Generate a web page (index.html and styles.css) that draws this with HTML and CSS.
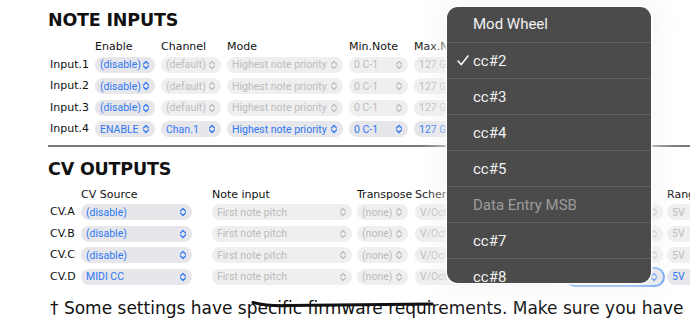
FILE: index.html
```html
<!DOCTYPE html>
<html lang="en">
<head>
    <meta charset="UTF-8">
    <meta name="viewport" content="width=device-width, initial-scale=1.0">
    <title>Settings</title>
    <link rel="stylesheet" href="styles.css">
</head>
<body>
    <div class="page">
        <h2 class="first">NOTE INPUTS</h2>
        <div class="grid notes">
            <span></span>
            <span class="hd">Enable</span>
            <span class="hd">Channel</span>
            <span class="hd">Mode</span>
            <span class="hd">Min.Note</span>
            <span class="hd">Max.Note</span>

            <span class="lbl">Input.1</span>
            <div class="sel on"><span>(disable)</span><svg viewBox="0 0 8 10"><path d="M1.5 4 L4 1.5 L6.5 4 M1.5 6 L4 8.5 L6.5 6"/></svg></div>
            <div class="sel off"><span>(default)</span><svg viewBox="0 0 8 10"><path d="M1.5 4 L4 1.5 L6.5 4 M1.5 6 L4 8.5 L6.5 6"/></svg></div>
            <div class="sel off"><span>Highest note priority</span><svg viewBox="0 0 8 10"><path d="M1.5 4 L4 1.5 L6.5 4 M1.5 6 L4 8.5 L6.5 6"/></svg></div>
            <div class="sel off"><span>0 C-1</span><svg viewBox="0 0 8 10"><path d="M1.5 4 L4 1.5 L6.5 4 M1.5 6 L4 8.5 L6.5 6"/></svg></div>
            <div class="sel off"><span>127 G9</span><svg viewBox="0 0 8 10"><path d="M1.5 4 L4 1.5 L6.5 4 M1.5 6 L4 8.5 L6.5 6"/></svg></div>

            <span class="lbl">Input.2</span>
            <div class="sel on"><span>(disable)</span><svg viewBox="0 0 8 10"><path d="M1.5 4 L4 1.5 L6.5 4 M1.5 6 L4 8.5 L6.5 6"/></svg></div>
            <div class="sel off"><span>(default)</span><svg viewBox="0 0 8 10"><path d="M1.5 4 L4 1.5 L6.5 4 M1.5 6 L4 8.5 L6.5 6"/></svg></div>
            <div class="sel off"><span>Highest note priority</span><svg viewBox="0 0 8 10"><path d="M1.5 4 L4 1.5 L6.5 4 M1.5 6 L4 8.5 L6.5 6"/></svg></div>
            <div class="sel off"><span>0 C-1</span><svg viewBox="0 0 8 10"><path d="M1.5 4 L4 1.5 L6.5 4 M1.5 6 L4 8.5 L6.5 6"/></svg></div>
            <div class="sel off"><span>127 G9</span><svg viewBox="0 0 8 10"><path d="M1.5 4 L4 1.5 L6.5 4 M1.5 6 L4 8.5 L6.5 6"/></svg></div>

            <span class="lbl">Input.3</span>
            <div class="sel on"><span>(disable)</span><svg viewBox="0 0 8 10"><path d="M1.5 4 L4 1.5 L6.5 4 M1.5 6 L4 8.5 L6.5 6"/></svg></div>
            <div class="sel off"><span>(default)</span><svg viewBox="0 0 8 10"><path d="M1.5 4 L4 1.5 L6.5 4 M1.5 6 L4 8.5 L6.5 6"/></svg></div>
            <div class="sel off"><span>Highest note priority</span><svg viewBox="0 0 8 10"><path d="M1.5 4 L4 1.5 L6.5 4 M1.5 6 L4 8.5 L6.5 6"/></svg></div>
            <div class="sel off"><span>0 C-1</span><svg viewBox="0 0 8 10"><path d="M1.5 4 L4 1.5 L6.5 4 M1.5 6 L4 8.5 L6.5 6"/></svg></div>
            <div class="sel off"><span>127 G9</span><svg viewBox="0 0 8 10"><path d="M1.5 4 L4 1.5 L6.5 4 M1.5 6 L4 8.5 L6.5 6"/></svg></div>

            <span class="lbl">Input.4</span>
            <div class="sel on"><span>ENABLE</span><svg viewBox="0 0 8 10"><path d="M1.5 4 L4 1.5 L6.5 4 M1.5 6 L4 8.5 L6.5 6"/></svg></div>
            <div class="sel on"><span>Chan.1</span><svg viewBox="0 0 8 10"><path d="M1.5 4 L4 1.5 L6.5 4 M1.5 6 L4 8.5 L6.5 6"/></svg></div>
            <div class="sel on"><span>Highest note priority</span><svg viewBox="0 0 8 10"><path d="M1.5 4 L4 1.5 L6.5 4 M1.5 6 L4 8.5 L6.5 6"/></svg></div>
            <div class="sel on"><span>0 C-1</span><svg viewBox="0 0 8 10"><path d="M1.5 4 L4 1.5 L6.5 4 M1.5 6 L4 8.5 L6.5 6"/></svg></div>
            <div class="sel on"><span>127 G9</span><svg viewBox="0 0 8 10"><path d="M1.5 4 L4 1.5 L6.5 4 M1.5 6 L4 8.5 L6.5 6"/></svg></div>
        </div>

        <hr>

        <h2>CV OUTPUTS</h2>
        <div class="grid cv">
            <span></span>
            <span class="hd">CV Source</span>
            <span class="hd">Note input</span>
            <span class="hd">Transpose</span>
            <span class="hd">Scheme</span>
            <span class="hd"></span>
            <span class="hd">Range</span>

            <span class="lbl">CV.A</span>
            <div class="sel on"><span>(disable)</span><svg viewBox="0 0 8 10"><path d="M1.5 4 L4 1.5 L6.5 4 M1.5 6 L4 8.5 L6.5 6"/></svg></div>
            <div class="sel off"><span>First note pitch</span><svg viewBox="0 0 8 10"><path d="M1.5 4 L4 1.5 L6.5 4 M1.5 6 L4 8.5 L6.5 6"/></svg></div>
            <div class="sel off"><span>(none)</span><svg viewBox="0 0 8 10"><path d="M1.5 4 L4 1.5 L6.5 4 M1.5 6 L4 8.5 L6.5 6"/></svg></div>
            <div class="sel off"><span>V/Oct</span><svg viewBox="0 0 8 10"><path d="M1.5 4 L4 1.5 L6.5 4 M1.5 6 L4 8.5 L6.5 6"/></svg></div>
            <div class="sel off"><span></span><svg viewBox="0 0 8 10"><path d="M1.5 4 L4 1.5 L6.5 4 M1.5 6 L4 8.5 L6.5 6"/></svg></div>
            <div class="sel off"><span>5V</span><svg viewBox="0 0 8 10"><path d="M1.5 4 L4 1.5 L6.5 4 M1.5 6 L4 8.5 L6.5 6"/></svg></div>

            <span class="lbl">CV.B</span>
            <div class="sel on"><span>(disable)</span><svg viewBox="0 0 8 10"><path d="M1.5 4 L4 1.5 L6.5 4 M1.5 6 L4 8.5 L6.5 6"/></svg></div>
            <div class="sel off"><span>First note pitch</span><svg viewBox="0 0 8 10"><path d="M1.5 4 L4 1.5 L6.5 4 M1.5 6 L4 8.5 L6.5 6"/></svg></div>
            <div class="sel off"><span>(none)</span><svg viewBox="0 0 8 10"><path d="M1.5 4 L4 1.5 L6.5 4 M1.5 6 L4 8.5 L6.5 6"/></svg></div>
            <div class="sel off"><span>V/Oct</span><svg viewBox="0 0 8 10"><path d="M1.5 4 L4 1.5 L6.5 4 M1.5 6 L4 8.5 L6.5 6"/></svg></div>
            <div class="sel off"><span></span><svg viewBox="0 0 8 10"><path d="M1.5 4 L4 1.5 L6.5 4 M1.5 6 L4 8.5 L6.5 6"/></svg></div>
            <div class="sel off"><span>5V</span><svg viewBox="0 0 8 10"><path d="M1.5 4 L4 1.5 L6.5 4 M1.5 6 L4 8.5 L6.5 6"/></svg></div>

            <span class="lbl">CV.C</span>
            <div class="sel on"><span>(disable)</span><svg viewBox="0 0 8 10"><path d="M1.5 4 L4 1.5 L6.5 4 M1.5 6 L4 8.5 L6.5 6"/></svg></div>
            <div class="sel off"><span>First note pitch</span><svg viewBox="0 0 8 10"><path d="M1.5 4 L4 1.5 L6.5 4 M1.5 6 L4 8.5 L6.5 6"/></svg></div>
            <div class="sel off"><span>(none)</span><svg viewBox="0 0 8 10"><path d="M1.5 4 L4 1.5 L6.5 4 M1.5 6 L4 8.5 L6.5 6"/></svg></div>
            <div class="sel off"><span>V/Oct</span><svg viewBox="0 0 8 10"><path d="M1.5 4 L4 1.5 L6.5 4 M1.5 6 L4 8.5 L6.5 6"/></svg></div>
            <div class="sel off"><span></span><svg viewBox="0 0 8 10"><path d="M1.5 4 L4 1.5 L6.5 4 M1.5 6 L4 8.5 L6.5 6"/></svg></div>
            <div class="sel off"><span>5V</span><svg viewBox="0 0 8 10"><path d="M1.5 4 L4 1.5 L6.5 4 M1.5 6 L4 8.5 L6.5 6"/></svg></div>

            <span class="lbl">CV.D</span>
            <div class="sel on"><span>MIDI CC</span><svg viewBox="0 0 8 10"><path d="M1.5 4 L4 1.5 L6.5 4 M1.5 6 L4 8.5 L6.5 6"/></svg></div>
            <div class="sel off"><span>First note pitch</span><svg viewBox="0 0 8 10"><path d="M1.5 4 L4 1.5 L6.5 4 M1.5 6 L4 8.5 L6.5 6"/></svg></div>
            <div class="sel off"><span>(none)</span><svg viewBox="0 0 8 10"><path d="M1.5 4 L4 1.5 L6.5 4 M1.5 6 L4 8.5 L6.5 6"/></svg></div>
            <div class="sel off"><span>V/Oct</span><svg viewBox="0 0 8 10"><path d="M1.5 4 L4 1.5 L6.5 4 M1.5 6 L4 8.5 L6.5 6"/></svg></div>
            <div class="sel on focus"><span></span><svg viewBox="0 0 8 10"><path d="M1.5 4 L4 1.5 L6.5 4 M1.5 6 L4 8.5 L6.5 6"/></svg></div>
            <div class="sel on"><span>5V</span><svg viewBox="0 0 8 10"><path d="M1.5 4 L4 1.5 L6.5 4 M1.5 6 L4 8.5 L6.5 6"/></svg></div>
        </div>

        <p class="note">&dagger; Some settings have specific firmware requirements. Make sure you have</p>
    </div>

    <!-- strike drawn over the footnote -->
    <svg class="strike" viewBox="0 0 690 318"><path d="M253 302.5 Q268 306.5 290 305.5 L432 304"/></svg>

    <!-- open picker for the focused select -->
    <div class="menu">
        <div class="item">Mod Wheel</div>
        <div class="item checked"><svg viewBox="0 0 12 11"><path d="M1 6 L4.3 9.6 L11 1"/></svg>cc#2</div>
        <div class="item">cc#3</div>
        <div class="item">cc#4</div>
        <div class="item">cc#5</div>
        <div class="item dim">Data Entry MSB</div>
        <div class="item">cc#7</div>
        <div class="item">cc#8</div>
    </div>
</body>
</html>
```

FILE: styles.css
```css
body {
    margin: 0;
    width: 690px;
    height: 318px;
    overflow: hidden;
    background: #fff;
    color: #111;
    font-family: "DejaVu Sans", Verdana, sans-serif;
    position: relative;
}
.page {
    padding-left: 48px;
    width: 900px;
}
h2 {
    font-size: 17.5px;
    line-height: 20px;
    font-weight: bold;
    margin: 11.8px 0 0 0;
    letter-spacing: -0.2px;
}
h2.first {
    margin-top: 10px;
}
.grid {
    display: grid;
    grid-template-rows: 9px repeat(4, 16px);
    row-gap: 5.5px;
    margin-left: 2px;
    align-items: center;
}
.notes {
    margin-top: 12px;
    grid-template-columns: 45px 66px 66px 122px 65px 65px;
}
.cv {
    margin-top: 11.2px;
    grid-template-columns: 31px 131px 145px 58px 152px 100px 60px;
}
.hd {
    font-size: 11px;
    line-height: 9px;
    white-space: nowrap;
}
.lbl {
    font-size: 11px;
    line-height: 16px;
    white-space: nowrap;
}
.sel {
    height: 16px;
    border-radius: 8px;
    display: flex;
    align-items: center;
    justify-content: space-between;
    padding: 0 5px 0 5px;
    font-family: Roboto, "Liberation Sans", sans-serif;
    font-size: 10.5px;
    white-space: nowrap;
    overflow: hidden;
    box-sizing: border-box;
}
.sel span {
    overflow: hidden;
}
.sel svg {
    width: 8px;
    height: 10px;
    flex: none;
    fill: none;
    stroke-width: 1.2;
    stroke-linecap: round;
    stroke-linejoin: round;
}
.sel.on {
    background: #e6e6eb;
    color: #2f78f2;
}
.sel.on svg {
    stroke: #2f78f2;
}
.sel.off {
    background: #efeff0;
    color: #bcbcbc;
}
.sel.off svg {
    stroke: #bcbcbc;
}
.sel.focus {
    box-shadow: 0 0 0 2px #5e9ef0;
}
.notes .sel:nth-child(6n+2),
.notes .sel:nth-child(6n+3) { width: 60px; }
.notes .sel:nth-child(6n+4) { width: 116px; }
.notes .sel:nth-child(6n+5) { width: 59px; }
.notes .sel:nth-child(6n) { width: 70px; }
.cv .sel:nth-child(7n+2) { width: 111px; }
.cv .sel:nth-child(7n+3) { width: 140px; }
.cv .sel:nth-child(7n+4) { width: 51px; }
.cv .sel:nth-child(7n+5) { width: 146px; }
.cv .sel:nth-child(7n+6) { width: 96px; }
.cv .sel:nth-child(7n) { width: 50px; }
hr {
    border: none;
    height: 2px;
    background: #7a7a7a;
    margin: 8px 0 0 0;
}
.note {
    margin: 13.5px 0 0 2px;
    font-size: 17px;
    line-height: 20px;
    white-space: nowrap;
}
.strike {
    position: absolute;
    left: 0;
    top: 0;
    width: 690px;
    height: 318px;
    pointer-events: none;
}
.strike path {
    fill: none;
    stroke: #111;
    stroke-width: 3;
    stroke-linecap: round;
}
.menu {
    position: absolute;
    left: 447px;
    top: 7px;
    width: 204px;
    height: 276px;
    background: #4b4b4b;
    border-radius: 11px;
    overflow: hidden;
    box-shadow: 0 0 0 1.5px rgba(255, 255, 255, 0.9), 0 0 22px 8px rgba(242, 242, 242, 0.7);
    font-family: Roboto, "Liberation Sans", sans-serif;
    font-size: 15px;
    color: #f2f2f2;
}
.item {
    height: 36px;
    line-height: 36px;
    padding-left: 26px;
    border-top: 1px solid #606060;
    box-sizing: border-box;
    position: relative;
}
.item:first-child {
    height: 35px;
    line-height: 35px;
    border-top: none;
}
.item.dim {
    color: #9c9c9c;
}
.item.checked svg {
    position: absolute;
    left: 10px;
    top: 12px;
    width: 12px;
    height: 11px;
    fill: none;
    stroke: #f2f2f2;
    stroke-width: 1.6;
    stroke-linecap: round;
    stroke-linejoin: round;
}
```
